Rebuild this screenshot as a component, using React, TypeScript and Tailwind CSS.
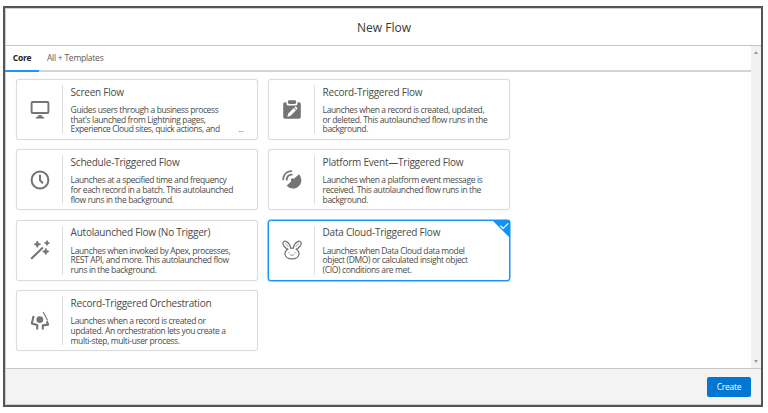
import React from 'react';

const iconClass = 'block h-5 w-5 overflow-visible';

const Monitor = () => (
  <svg viewBox="0 0 20 20" className={iconClass} fill="none">
    <rect x="1.6" y="2" width="16.8" height="11" rx="1" stroke="#747474" strokeWidth="1.9" />
    <path d="M8.3 15h3.4v1.4l2.4.7v1.3H5.9v-1.3l2.4-.7z" fill="#747474" />
  </svg>
);
const Clock = () => (
  <svg viewBox="0 0 20 20" className={iconClass} fill="none" stroke="#747474" strokeWidth="2" strokeLinecap="round">
    <circle cx="10" cy="10" r="8.4" />
    <path d="M10 5.6v4.7l2.4 2.4" />
  </svg>
);
const Wand = () => (
  <svg viewBox="0 0 20 20" className={iconClass} fill="#747474">
    <path d="M1.8 18.2 9.3 11M10.3 10l2-1.9" stroke="#747474" strokeWidth="2.1" strokeLinecap="round" />
    <path d="M7.3 1l1 2.3 2.3 1-2.3 1-1 2.3-1-2.3-2.3-1 2.3-1zM17 .5l.8 1.7 1.7.8-1.7.8-.8 1.7-.8-1.7-1.7-.8 1.7-.8zM15.8 8.3l1 2.2 2.2 1-2.2 1-1 2.2-1-2.2-2.2-1 2.2-1z" stroke="#747474" strokeWidth=".8" strokeLinejoin="round" />
  </svg>
);
const Conductor = () => (
  <svg viewBox="0 0 20 20" className={iconClass} fill="none" stroke="#747474" strokeWidth="2.1" strokeLinejoin="round">
    <circle cx="9.8" cy="8.6" r="3.4" fill="#747474" stroke="none" />
    <path d="M3.6 5 1.8 12.4l5.4 1.7v4.3M16.8 10.4l1.4 3.2-5.4.8v4" />
    <path d="M13.2 1 17.6 9.6" strokeWidth="1.1" />
  </svg>
);
const Clipboard = () => (
  <svg viewBox="0 0 20 20" className={iconClass} fill="#747474">
    <path d="M3.2 2.2h1.3v1.2c0 1.4.8 2 1.9 2h7.2c1.1 0 1.9-.6 1.9-2V2.2h1.3c1.3 0 2 .7 2 2v12.6c0 1.3-.7 2-2 2H3.2c-1.3 0-2-.7-2-2V4.2c0-1.3.7-2 2-2z" />
    <path d="M7.4.2h5.2c1 0 1.5.5 1.5 1.3v1.1c0 .8-.5 1.3-1.5 1.3H7.4c-1 0-1.5-.5-1.5-1.3V1.5C5.9.7 6.4.2 7.4.2z" />
    <path d="m5.4 16.8.7-3 5.7-5.7 2.2 2.2-5.7 5.7zM12.4 7.5l.8-.8c.6-.6 2.7 1.5 2.2 2.2l-.8.8z" fill="#fff" />
  </svg>
);
const Satellite = () => (
  <svg viewBox="0 0 20 20" className={iconClass} fill="#747474">
    <path d="M17 4.2c4.4 5 2.4 12.8-4.5 14.2-3 .6-5.8-.5-7.8-2.9l4.5-4.1-.5-1.8 1.4-1.3 1.8.5z" />
    <path d="M1.2 9.3C1.4 4.6 4.5 1.4 9.2 1.1M4.7 9.8c.1-3 2.1-5 5.1-5.2" fill="none" stroke="#747474" strokeWidth="1.8" strokeLinecap="round" />
  </svg>
);
const Rabbit = () => (
  <svg viewBox="0 0 20 20" className={iconClass} fill="none" stroke="#747474" strokeWidth="1.25" strokeLinecap="round" strokeLinejoin="round">
    <path d="M6 9.3C3.6 8 .9 6.4.9 3.2c0-1.6 1.4-2.5 3-1.8C6.6 2.5 8.2 5.2 8.8 8.3c.8-.2 1.7-.2 2.5 0 .6-3.1 2.2-5.8 4.9-6.9 1.6-.7 3 .2 3 1.8 0 3.2-2.7 4.8-5.1 6.1 2 .9 2.9 2.7 2.9 4.5 0 3-2.8 5.1-7 5.1s-7-2.1-7-5.1c0-1.8.9-3.6 2.9-4.5z" />
    <path d="M3.4 3.5c1.4.6 2.3 1.8 2.7 3.1M16.7 3.5c-1.4.6-2.3 1.8-2.7 3.1" strokeWidth=".6" />
    <path d="M7 12.7v.2M13.1 12.7v.2M8.5 14.8c.5.7 1.3.7 1.6 0 .3.7 1.1.7 1.6 0" strokeWidth=".9" />
  </svg>
);

interface Flow {
  title: string;
  icon: React.ReactNode;
  lines: string[];
  selected?: boolean;
  more?: boolean;
}

const left: Flow[] = [
  { title: 'Screen Flow', icon: <Monitor />, more: true, lines: ['Guides users through a business process', "that's launched from Lightning pages,", 'Experience Cloud sites, quick actions, and'] },
  { title: 'Schedule-Triggered Flow', icon: <Clock />, lines: ['Launches at a specified time and frequency', 'for each record in a batch. This autolaunched', 'flow runs in the background.'] },
  { title: 'Autolaunched Flow (No Trigger)', icon: <Wand />, lines: ['Launches when invoked by Apex, processes,', 'REST API, and more. This autolaunched flow', 'runs in the background.'] },
  { title: 'Record-Triggered Orchestration', icon: <Conductor />, lines: ['Launches when a record is created or', 'updated. An orchestration lets you create a', 'multi-step, multi-user process.'] },
];
const right: Flow[] = [
  { title: 'Record-Triggered Flow', icon: <Clipboard />, lines: ['Launches when a record is created, updated,', 'or deleted. This autolaunched flow runs in the', 'background.'] },
  { title: 'Platform Event—Triggered Flow', icon: <Satellite />, lines: ['Launches when a platform event message is', 'received. This autolaunched flow runs in the', 'background.'] },
  { title: 'Data Cloud-Triggered Flow', icon: <Rabbit />, selected: true, lines: ['Launches when Data Cloud data model', 'object (DMO) or calculated insight object', '(CIO) conditions are met.'] },
];

const Card = ({ flow }: { flow: Flow }) => (
  <div className={`relative flex h-[61px] w-[242px] rounded-[3px] bg-white ${flow.selected ? 'border border-[#1b96ff] shadow-[0_0_0_0.5px_#1b96ff]' : 'border border-[#dcdcdc] shadow-[0_0_1px_#ddd]'}`}>
    <div className="flex w-[45px] shrink-0 items-center justify-center">{flow.icon}</div>
    <div className="my-[5px] w-px shrink-0 bg-[#dedede]" />
    <div className="pl-[7.6px] pt-[4.5px] text-[#4a4a48]">
      <h2 className="whitespace-nowrap text-[10px] leading-[14px] tracking-[-0.23px]">{flow.title}</h2>
      <div className="mt-[6.5px] text-[8.5px] leading-[9.7px] tracking-[-0.37px]">
        {flow.lines.map((text) => (
          <p key={text} className="whitespace-nowrap">{text}</p>
        ))}
      </div>
    </div>
    {flow.more && <span className="absolute bottom-[5px] right-[13px] text-[7px] leading-[9px] text-[#3e3e3c]">...</span>}
    {flow.selected && (
      <svg viewBox="0 0 18 18" className="absolute -right-px -top-px h-[18px] w-[18px]">
        <path d="M0 0h16q2 0 2 2v16z" fill="#0d92fb" />
        <path d="m8.5 5.7 2.7 2.6 5-5" fill="none" stroke="#fff" strokeWidth="1.2" />
      </svg>
    )}
  </div>
);

export default function App() {
  return (
    <div className="h-[413px] w-[768px] bg-white pl-[3px] pt-[6px] font-['Open_Sans','Noto_Sans',sans-serif]">
      <div className="flex h-[401px] w-[760px] flex-col border-2 border-[#555] bg-white">
        <header className="flex h-[38px] shrink-0 items-center justify-center border-b border-[#c5c5c5] pl-[2px] pt-[3px] shadow-[inset_1px_1px_0_#cfcfcf]">
          <h1 className="text-[12px] leading-4 text-[#3a3836]">New Flow</h1>
        </header>
        <div className="flex min-h-0 grow">
          <main className="grow border-l border-[#cfcfcf]">
            <nav className="flex h-[26px] border-b-2 border-[#d4d4d4] text-[8.5px] tracking-[-0.25px]">
              <div className="-mb-0.5 -ml-px flex w-[34px] items-center justify-center border-b-2 border-[#1b96ff] pt-px font-bold text-[#222]">Core</div>
              <div className="ml-2 flex items-center pt-px text-[#5c5a58]">All + Templates</div>
            </nav>
            <div className="flex gap-[10px] pl-[10px] pt-[7px]">
              <div className="flex flex-col gap-[9.4px]">
                {left.map((flow) => <Card key={flow.title} flow={flow} />)}
              </div>
              <div className="flex flex-col gap-[9.4px]">
                {right.map((flow) => <Card key={flow.title} flow={flow} />)}
              </div>
            </div>
          </main>
          <div className="flex w-[10px] flex-col items-center justify-between bg-[#f1f1f1] py-[5px]">
            <div className="border-x-2 border-b-[3px] border-x-transparent border-b-[#999]" />
            <div className="border-x-2 border-t-[3px] border-x-transparent border-t-[#999]" />
          </div>
        </div>
        <footer className="flex h-[37px] shrink-0 items-center justify-end border-t border-[#c8c8c8] bg-[#f3f3f3] pr-[10px] shadow-[inset_1px_-1px_0_#cfcfcf]">
          <button className="h-5 w-11 rounded-[2px] bg-[#0176d3] text-[8.5px] tracking-[-0.25px] text-white">Create</button>
        </footer>
      </div>
    </div>
  );
}
